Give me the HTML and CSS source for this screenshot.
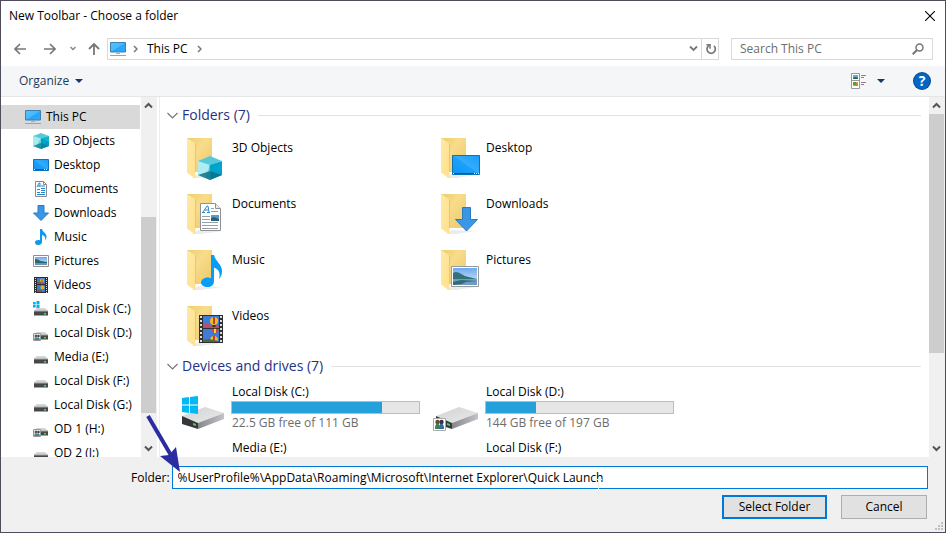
FILE: index.html
```html
<!DOCTYPE html>
<html lang="en">
<head>
<meta charset="utf-8">
<title>New Toolbar - Choose a folder</title>
<link rel="stylesheet" href="styles.css">
</head>
<body>
<svg class="defs" aria-hidden="true">
  <defs>
    <linearGradient id="screen" x1="0" y1="0" x2="1" y2="1"><stop offset="0" stop-color="#5cc0fa"/><stop offset=".5" stop-color="#4ab8fb"/><stop offset=".52" stop-color="#26a5fb"/><stop offset="1" stop-color="#2bacff"/></linearGradient>
    <linearGradient id="desk" x1="0" y1="1" x2="1" y2="0"><stop offset="0" stop-color="#0c95f8"/><stop offset=".5" stop-color="#1ba1fb"/><stop offset=".52" stop-color="#34adfc"/><stop offset="1" stop-color="#189dfa"/></linearGradient>
    <linearGradient id="back" x1="0" y1="0" x2="1" y2="1"><stop offset="0" stop-color="#f0cd6c"/><stop offset=".4" stop-color="#f8dc8b"/><stop offset="1" stop-color="#ecc768"/></linearGradient>
    <linearGradient id="flap" x1="0" y1="0" x2="1" y2="1"><stop offset="0" stop-color="#ffe9a6"/><stop offset="1" stop-color="#ffe08c"/></linearGradient>
    <linearGradient id="top" x1="0" y1="0" x2="1" y2="1"><stop offset="0" stop-color="#d2d3d5"/><stop offset="1" stop-color="#e9e9eb"/></linearGradient>
    <linearGradient id="side" x1="0" y1="0" x2="1" y2="0"><stop offset="0" stop-color="#85878a"/><stop offset="1" stop-color="#c3c4c7"/></linearGradient>
    <linearGradient id="sky" x1="0" y1="0" x2="0" y2="1"><stop offset="0" stop-color="#6ba9ef"/><stop offset="1" stop-color="#dff0fa"/></linearGradient>
  </defs>
  <symbol id="i-pc" viewBox="0 0 16 16"><path d="M.5 1.500h15v9.500H.5z" fill="url(#screen)" stroke="#3f7fac"/><path d="M6 12h4v1H6z" fill="#9bb4c6"/><path d="M0 14h16v1H0z" fill="#8fa6ba"/></symbol>
  <symbol id="i-cube" viewBox="0 0 16 16"><path d="M0 3 8 5v11L0 13z" fill="#5fd3da"/><path d="M0 3 8 5 3 14 0 13z" fill="#a6ecee"/><path d="M16 3 8 5v11l8-3z" fill="#009fc4"/><path d="M8 5 16 3v6z" fill="#0bb5d4"/><path d="M0 3 8 0l8 3-8 2.500z" fill="#58cad6"/><path d="M8 10 16 13 8 16 0 13z" fill="#077d96" opacity=".75"/></symbol>
  <symbol id="i-desktop" viewBox="0 0 16 16"><path d="M.5 2.500h15v11H.5z" fill="url(#desk)" stroke="#1373b5"/><path d="M1 12h14v1H1z" fill="#075d9e"/><path d="M1 12h1v1H1zM11 12h1v1h-1zM13 12h1v1h-1z" fill="#fff"/></symbol>
  <symbol id="i-doc" viewBox="0 0 16 16"><path d="M2.500.5h8l3 3v12h-11z" fill="#fff" stroke="#8b8b8b"/><path d="M10.500.5v3h3" fill="none" stroke="#8b8b8b"/><path d="m4 6 2-4h1v4M5 5h2M8 5h4M4 8.500h3M8 7.500h4M8 9.500h4M4 11.500h3M8 11.500h4M4 13.500h8" fill="none" stroke="#2589d0"/></symbol>
  <symbol id="i-down" viewBox="0 0 16 16"><path d="M5 .5h6V8h4.500L8 15.500.5 8H5z" fill="#3897e6" stroke="#2c78bd"/></symbol>
  <symbol id="i-music" viewBox="0 0 16 16"><path d="M7 0h2c.5 3 4.500 4 4.500 7.500 0 1.500-.5 3-1.500 3.500 1-3-1-4.500-3-5v7c0 1.800-1.700 3-3.600 3S2 15 2 13.400 3.600 11 5.200 11c.8 0 1.300.1 1.800.3z" fill="#0d99f2"/></symbol>
  <symbol id="i-picture" viewBox="0 0 16 16"><path d="M.5 2.500h15v11H.5z" fill="#fff" stroke="#8f8f8f"/><path d="M2 4h12v8H2z" fill="url(#sky)"/><path d="M2 6c2-.5 4 1 6 2l6 1v1H2z" fill="#2b6673"/><path d="M2 10h12v2H2z" fill="#6b93ad"/></symbol>
  <symbol id="i-video" viewBox="0 0 16 16"><path d="M1 0h14v16H1z" fill="#2d2d2d"/><path d="M4 1h8v6H4zM4 8h8v7H4z" fill="#3c7bd0"/><path d="M2.500 1v15M13.500 1v15" stroke="#ddd" stroke-dasharray="1 1"/><circle cx="9" cy="3.500" r="2" fill="#e9b520"/><circle cx="9.500" cy="10.500" r="2" fill="#e4ae20"/><path d="M8.500 2h1v4h-1z" fill="#d23828"/><path d="M4 5h4v2H4zM4 13h5v2H4z" fill="#7a5b45"/></symbol>
  <symbol id="i-disk" viewBox="0 0 16 16"><path d="M3.500 7h8.500l3 3H1z" fill="#d3d4d6"/><path d="M1 10h14v4.500H1z" fill="#454749"/><path d="M1 9.500h14v1H1z" fill="#a5a6a8"/><path d="M11 12h2v1.500h-2z" fill="#41dd52"/></symbol>
  <symbol id="i-sysdisk" viewBox="0 0 16 16"><use href="#i-disk"/><path d="M0 0h7v7H0z" fill="#fff"/><path d="M0 1h2.700v2.500H0zM3.500 0h3v3.500h-3zM0 4h2.700v2.500H0zM3.500 4h3v3h-3z" fill="#00b3f0"/></symbol>
  <symbol id="i-shared" viewBox="0 0 16 16"><use href="#i-disk"/><path d="M.5 8.500h7v7h-7z" fill="#e8eef0" stroke="#999"/><circle cx="3" cy="11" r="1.500" fill="#685341"/><circle cx="5.500" cy="11" r="1.200" fill="#373f47"/><path d="M1 15q1-4 3-2 2-2 3 2z" fill="#3a8797"/></symbol>

  <symbol id="f-base" viewBox="0 0 48 48"><path d="m9 43 6-4 24 1-20 3z" fill="#ececec"/><path d="M4 3h25v34H8z" fill="url(#back)"/><path d="m4 3 8.500 5.500V43h-1L4 37.500z" fill="url(#flap)"/><path d="M12.500 8.500V37" stroke="#e3bd62" stroke-width=".7"/></symbol>
  <symbol id="f-cube" viewBox="-1 0 48 48"><use href="#f-base" width="48" height="48"/><path d="m15 26 12 3.500V45l-12-5z" fill="#75d5de"/><path d="m15 26 12 3.500L22 43l-7-3z" fill="#b0edf0"/><path d="m39 26-12 3.500V45l12-5z" fill="#00a3ce"/><path d="m15 26 12-5 12 5-12 4z" fill="#55c9dc"/><path d="m27 36 12 4-12 5-12-5z" fill="#066b80" opacity=".8"/><path d="M27 30v14" stroke="#1695ad" stroke-width=".6"/></symbol>
  <symbol id="f-desktop" viewBox="-1 0 48 48"><use href="#f-base" width="48" height="48"/><path d="M15.500 20.500h27v19h-27z" fill="url(#desk)" stroke="#1471ad"/><path d="M16 38h26v1H16z" fill="#07599a"/><path d="M16 38h1v1h-1zM37 38h1v1h-1zM39 38h1v1h-1zM41 38h1v1h-1z" fill="#fff"/></symbol>
  <symbol id="f-doc" viewBox="-1 0 48 48"><use href="#f-base" width="48" height="48"/><path d="M17.500 12.500h15l5 5v22h-20z" fill="#fff" stroke="#909090"/><path d="M32.500 12.500v5h5" fill="#e9e9e9" stroke="#909090"/><path d="m20 21 4-6h1l1 6M21.500 19h4M19 21.500h3M24 21.500h3" fill="none" stroke="#268bd2"/><path d="M28 17.500h3M28 20.500h7M19 25.500h8M19 28.500h8M19 31.500h16M19 34.500h16M19 37.500h16" stroke="#92a0aa"/><path d="M28 24h8v6h-8z" fill="#579cd5"/><path d="m28 27 3-1 5 2v2h-8z" fill="#316070"/></symbol>
  <symbol id="f-down" viewBox="-1 0 48 48"><use href="#f-base" width="48" height="48"/><path d="M25.500 16.500h8v12h7L29.500 40l-11-11.500h7z" fill="#3997e5" stroke="#2c7abe"/></symbol>
  <symbol id="f-music" viewBox="-1 0 48 48"><use href="#f-base" width="48" height="48"/><path d="M28 8h3c1 6 8 9 8 16 0 3-1 6-3 8 2-7-1-10-5-11.500V34c0 4-3 6-6.500 6S18 38 18 35.500s3-5 6.500-5c1.500 0 2.500.3 3.500.7z" fill="#079cf5"/></symbol>
  <symbol id="f-picture" viewBox="-1 0 48 48"><use href="#f-base" width="48" height="48"/><path d="M14.500 19.500h27v20h-27z" fill="#fff" stroke="#999"/><path d="M16 21h24v17H16z" fill="url(#sky)"/><path d="M16 26c4-3 8 1 12 3l12 3v1H16z" fill="#34727b"/><path d="M16 32h24v6H16z" fill="#6f9cc4"/><path d="m16 35 8-2 16 1-11 1-4 2-9 1z" fill="#356b72"/></symbol>
  <symbol id="f-video" viewBox="-1 0 48 48"><use href="#f-base" width="48" height="48"/><path d="M16 12h24v28H16z" fill="#303030"/><path d="M20 13h16v12H20zM20 26h16v13H20z" fill="#3f7cda"/><path d="M18 13v27M38 13v27" stroke="#ddd" stroke-width="2" stroke-dasharray="2 2"/><path d="M20 22l4-2 5 3 7-1v3H20z" fill="#b75068"/><circle cx="31" cy="18" r="4" fill="#f0bd20"/><path d="M30 14h2v7h-2z" fill="#d53426"/><path d="M29.500 22h3v2h-3z" fill="#3a2a22"/><path d="M28 27q4-3 8 0l-4 4z" fill="#c94734"/><path d="M31 26h2v4h-2z" fill="#efd345"/><path d="M27 38q0-5 4-5t4 5z" fill="#f0bd20"/><path d="M30 33h2v5h-2z" fill="#d53426"/><path d="m20 37 6-1 10 2v1H20z" fill="#456c47"/></symbol>
  <symbol id="d-base" viewBox="0 0 48 48"><path d="m3 24 23-9 19 6-26 10z" fill="url(#top)"/><path d="m19 31 26-10v6L19 37z" fill="url(#side)"/><path d="m3 24 16 7v6L3 32z" fill="#35383a"/><path d="M14 31l3 1v2l-3-1z" fill="#35dd4a"/></symbol>
  <symbol id="d-system" viewBox="0 0 48 48"><use href="#d-base"/><path d="m3 6 7-1v7.500H3zM11 5l8-1v8.500h-8zM3 13.500h7V21l-7-1zM11 13.500h8V22l-8-1z" fill="#00b9f2"/></symbol>
  <symbol id="d-shared" viewBox="0 0 48 48"><use href="#d-base"/><path d="M.5 26.500h12v12H.5z" fill="#fff" stroke="#aaa"/><circle cx="4.500" cy="30" r="2.200" fill="#6d4934"/><circle cx="8.500" cy="30" r="2.200" fill="#30343b"/><path d="M2 37q0-6 3-5 2 0 2 5z" fill="#3a7f5b"/><path d="M6 37q0-6 3-5 2 0 2 5z" fill="#346d9d"/></symbol>

  <symbol id="chev-up" viewBox="0 0 9 7"><path d="m1 5.500 3.500-3.500L8 5.500" fill="none" stroke="#555" stroke-width="2"/></symbol>
  <symbol id="chev-down" viewBox="0 0 9 7"><path d="m1 1.500 3.500 3.500L8 1.500" fill="none" stroke="#555" stroke-width="2"/></symbol>
  <symbol id="chev-right" viewBox="0 0 5 8"><path d="m1 1 3 3-3 3" fill="none" stroke="#777" stroke-width="1.500"/></symbol>
  <symbol id="caret" viewBox="0 0 8 4"><path d="M0 0h8L4 4z" fill="#1a3763"/></symbol>
  <symbol id="expand" viewBox="0 0 11 7"><path d="m.5 1 5 5 5-5" fill="none" stroke="#777" stroke-width="1.200"/></symbol>
</svg>

<main class="dialog">
  <header class="titlebar">
    <h1>New Toolbar - Choose a folder</h1>
    <button class="plain" aria-label="Close"><svg width="10" height="10" viewBox="0 0 10 10"><path d="m0 0 10 10M10 0 0 10" stroke="#000" stroke-width="1.100"/></svg></button>
  </header>

  <nav class="navrow" aria-label="Navigation">
    <div class="history">
      <button class="plain" aria-label="Back"><svg width="12" height="12" viewBox="0 0 12 12"><path d="M12 6H1M6 1 1 6l5 5" fill="none" stroke="#777" stroke-width="1.600"/></svg></button>
      <button class="plain" aria-label="Forward"><svg width="12" height="12" viewBox="0 0 12 12"><path d="M0 6h11M6 1l5 5-5 5" fill="none" stroke="#777" stroke-width="1.600"/></svg></button>
      <button class="plain recent" aria-label="Recent locations"><svg width="6" height="5" viewBox="0 0 6 5"><path d="m.5 1 2.500 2.500L5.500 1" fill="none" stroke="#888" stroke-width="1.500"/></svg></button>
      <button class="plain" aria-label="Up"><svg width="12" height="12" viewBox="0 0 12 12"><path d="M6 12V1M1 6l5-5 5 5" fill="none" stroke="#777" stroke-width="1.800"/></svg></button>
    </div>
    <div class="address">
      <svg width="16" height="16"><use href="#i-pc"/></svg>
      <svg width="5" height="8"><use href="#chev-right"/></svg>
      <button class="plain crumb">This PC</button>
      <svg width="5" height="8"><use href="#chev-right"/></svg>
      <button class="plain drop" aria-label="Previous locations"><svg width="9" height="7" viewBox="0 0 9 7"><path d="m1 1.500 3.500 3.500L8 1.500" fill="none" stroke="#777" stroke-width="1.800"/></svg></button>
      <button class="plain refresh" aria-label="Refresh"><svg width="12" height="12" viewBox="0 0 12 12"><path d="M9 3A4.200 4.200 0 1 1 4 2.500" fill="none" stroke="#777" stroke-width="1.700"/><path d="M1.500 1.800H5v4" fill="none" stroke="#777" stroke-width="1.500"/></svg></button>
    </div>
    <div class="search">
      <input type="search" placeholder="Search This PC" aria-label="Search This PC">
      <svg width="12" height="12" viewBox="0 0 12 12"><circle cx="7.500" cy="4.500" r="3.500" fill="none" stroke="#777" stroke-width="1.500"/><path d="M5 7 .7 11.300" stroke="#777" stroke-width="2"/></svg>
    </div>
  </nav>

  <div class="commands">
    <button class="plain organize">Organize <svg width="8" height="4"><use href="#caret"/></svg></button>
    <button class="plain view" aria-label="Change your view">
      <svg width="16" height="16" viewBox="0 0 16 16"><path d="M.5.5h8v15h-8zM0 7.500h9" fill="#fff" stroke="#999"/><path d="M2 2h5v4H2z" fill="#66a9e8"/><path d="M2 5q3-2 5 0v1H2z" fill="#296d3d"/><path d="M2 9h5v4H2z" fill="#c9a449"/><circle cx="5.500" cy="11.500" r="1.500" fill="#df7728"/><path d="M2 9h3v3H2z" fill="#589a48"/><path d="M10 2.500h5M10 4.500h3M10 9.500h5M10 11.500h3" stroke="#9b7b86"/></svg>
      <svg width="8" height="4"><use href="#caret"/></svg>
    </button>
    <button class="plain help" aria-label="Help">?</button>
  </div>

  <div class="browser">
    <nav class="tree" aria-label="Folders">
      <ul>
        <li class="selected"><a href="#"><svg><use href="#i-pc"/></svg>This PC</a></li>
        <li><a href="#"><svg><use href="#i-cube"/></svg>3D Objects</a></li>
        <li><a href="#"><svg><use href="#i-desktop"/></svg>Desktop</a></li>
        <li><a href="#"><svg><use href="#i-doc"/></svg>Documents</a></li>
        <li><a href="#"><svg><use href="#i-down"/></svg>Downloads</a></li>
        <li><a href="#"><svg><use href="#i-music"/></svg>Music</a></li>
        <li><a href="#"><svg><use href="#i-picture"/></svg>Pictures</a></li>
        <li><a href="#"><svg><use href="#i-video"/></svg>Videos</a></li>
        <li><a href="#"><svg><use href="#i-sysdisk"/></svg>Local Disk (C:)</a></li>
        <li><a href="#"><svg><use href="#i-shared"/></svg>Local Disk (D:)</a></li>
        <li><a href="#"><svg><use href="#i-disk"/></svg>Media (E:)</a></li>
        <li><a href="#"><svg><use href="#i-disk"/></svg>Local Disk (F:)</a></li>
        <li><a href="#"><svg><use href="#i-disk"/></svg>Local Disk (G:)</a></li>
        <li><a href="#"><svg><use href="#i-shared"/></svg>OD 1 (H:)</a></li>
        <li><a href="#"><svg><use href="#i-disk"/></svg>OD 2 (I:)</a></li>
      </ul>
    </nav>
    <div class="scrollbar tree-scroll">
      <button class="plain" aria-label="Scroll folders up"><svg width="9" height="7"><use href="#chev-up"/></svg></button>
      <div class="track"><div class="thumb"></div></div>
      <button class="plain" aria-label="Scroll folders down"><svg width="9" height="7"><use href="#chev-down"/></svg></button>
    </div>
    <div class="content">
      <section>
        <h2><svg width="11" height="7"><use href="#expand"/></svg>Folders (7)</h2>
        <div class="items">
          <a class="item" href="#"><svg><use href="#f-cube"/></svg><span>3D Objects</span></a>
          <a class="item" href="#"><svg><use href="#f-desktop"/></svg><span>Desktop</span></a>
          <a class="item" href="#"><svg><use href="#f-doc"/></svg><span>Documents</span></a>
          <a class="item" href="#"><svg><use href="#f-down"/></svg><span>Downloads</span></a>
          <a class="item" href="#"><svg><use href="#f-music"/></svg><span>Music</span></a>
          <a class="item" href="#"><svg><use href="#f-picture"/></svg><span>Pictures</span></a>
          <a class="item" href="#"><svg><use href="#f-video"/></svg><span>Videos</span></a>
        </div>
      </section>
      <section>
        <h2><svg width="11" height="7"><use href="#expand"/></svg>Devices and drives (7)</h2>
        <div class="items">
          <a class="item drive" href="#"><svg><use href="#d-system"/></svg><span class="info"><span>Local Disk (C:)</span><span class="bar"><span class="used" style="width:80%"></span></span><span class="free">22.5 GB free of 111 GB</span></span></a>
          <a class="item drive" href="#"><svg><use href="#d-shared"/></svg><span class="info"><span>Local Disk (D:)</span><span class="bar"><span class="used" style="width:27%"></span></span><span class="free">144 GB free of 197 GB</span></span></a>
          <a class="item drive" href="#"><svg></svg><span class="info"><span>Media (E:)</span></span></a>
          <a class="item drive" href="#"><svg></svg><span class="info"><span>Local Disk (F:)</span></span></a>
        </div>
      </section>
    </div>
    <div class="scrollbar content-scroll">
      <button class="plain" aria-label="Scroll up"><svg width="9" height="7"><use href="#chev-up"/></svg></button>
      <div class="track"><div class="thumb"></div></div>
      <button class="plain" aria-label="Scroll down"><svg width="9" height="7"><use href="#chev-down"/></svg></button>
    </div>
  </div>

  <form class="footer">
    <div class="field">
      <label for="folder">Folder:</label>
      <div class="fieldbox">
        <input id="folder" type="text" value="%UserProfile%\AppData\Roaming\Microsoft\Internet Explorer\Quick Launch">
        <svg class="pointer" width="36" height="60" viewBox="0 0 36 60" aria-hidden="true"><path d="m3 4 24 41" stroke="#2b2ca1" stroke-width="4"/><path d="m35 60-20-16 9-1 7-8z" fill="#2b2ca1"/></svg>
        <svg class="ibeam" width="7" height="16" viewBox="0 0 7 16" aria-hidden="true"><path d="M0 .5h7M3.500 1v14M0 15.500h7" stroke="#ededed"/></svg>
      </div>
    </div>
    <div class="actions">
      <button type="button" class="action primary">Select Folder</button>
      <button type="button" class="action">Cancel</button>
    </div>
    <svg class="grip" width="9" height="9" viewBox="0 0 9 9" aria-hidden="true"><path d="M6 0h2v2H6zM3 3h2v2H3zM6 3h2v2H6zM0 6h2v2H0zM3 6h2v2H3zM6 6h2v2H6z" fill="#bfbfbf"/></svg>
  </form>
</main>
</body>
</html>
```
FILE: styles.css
```css
* {
  box-sizing: border-box;
}

body {
  margin: 0;
  font: 12px/16px "Open Sans", "Noto Sans", sans-serif;
  color: #000;
}

button,
input {
  font: inherit;
  color: inherit;
}

svg {
  display: block;
  flex: none;
}

a {
  color: inherit;
  text-decoration: none;
}

h1,
h2,
ul {
  margin: 0;
  padding: 0;
  font: inherit;
  list-style: none;
}

.defs {
  position: absolute;
  width: 0;
  height: 0;
}

.plain {
  display: flex;
  align-items: center;
  justify-content: center;
  padding: 0;
  border: 0;
  background: none;
}

.dialog {
  display: flex;
  flex-direction: column;
  height: 100vh;
  border: 1px solid #514b5e;
  background: #fff;
}

.titlebar {
  display: flex;
  flex: none;
  align-items: center;
  justify-content: space-between;
  height: 30px;
  padding: 0 10px 0 8px;
}

.navrow {
  display: flex;
  flex: none;
  align-items: center;
  gap: 12px;
  height: 35px;
  padding: 0 12px 0 13px;
}

.history {
  display: flex;
  align-items: center;
  gap: 14px;
  margin-right: -5px;
}

.history .plain:nth-child(2) {
  margin-left: 4px;
}

.history .recent {
  margin-right: -2px;
}

.address {
  display: flex;
  flex: 1;
  align-items: center;
  height: 22px;
  padding-left: 2px;
  border: 1px solid #d9d9d9;
}

.address > svg + svg {
  margin-left: 7px;
}

.crumb {
  margin: 0 9px;
}

.drop {
  width: 16px;
  height: 20px;
  margin-left: auto;
}

.refresh {
  width: 17px;
  height: 20px;
  padding-left: 2px;
  border-left: 1px solid #d9d9d9;
}

.search {
  display: flex;
  align-items: center;
  width: 202px;
  height: 22px;
  padding: 0 8px;
  border: 1px solid #d9d9d9;
}

.search input {
  flex: 1;
  min-width: 0;
  padding: 0;
  border: 0;
  outline: 0;
}

.search input::placeholder {
  color: #6d6d6d;
}

.commands {
  display: flex;
  flex: none;
  align-items: center;
  height: 31px;
  padding: 0 15px 0 18px;
  border-bottom: 1px solid #e5e6e8;
  background: #f5f6f7;
}

.organize {
  gap: 6px;
  color: #1e395b;
}

.view {
  gap: 10px;
  margin-left: auto;
}

.help {
  width: 16px;
  height: 16px;
  margin-left: 29px;
  border-radius: 50%;
  background: #0067c5;
  box-shadow: 0 0 0 1px #0a4a8a;
  color: #fff;
  font-weight: 700;
  font-size: 14px;
}

.browser {
  display: flex;
  flex: 1;
  min-height: 0;
}

.tree {
  width: 139px;
  padding-top: 8px;
  overflow: hidden;
}

.tree a {
  display: flex;
  align-items: center;
  gap: 5px;
  height: 24px;
  padding-left: 32px;
  white-space: nowrap;
}

.tree svg {
  width: 16px;
  height: 16px;
}

.tree .selected a {
  padding-left: 24px;
  background: #d9d9d9;
}

.scrollbar {
  display: flex;
  flex: none;
  flex-direction: column;
  width: 16px;
  padding-right: 1px;
  background: #f0f0f0;
}

.scrollbar .plain {
  height: 17px;
}

.track {
  display: flex;
  flex: 1;
  flex-direction: column;
}

.track::before,
.track::after {
  content: "";
}

.thumb {
  background: #cdcdcd;
}

.tree-scroll {
  margin-left: 1px;
}

.tree-scroll .track::before {
  flex: 103;
}

.tree-scroll .thumb {
  flex: 196;
}

.tree-scroll .track::after {
  flex: 27;
}

.content-scroll .thumb {
  flex: 239;
}

.content-scroll .track::after {
  flex: 87;
}

.content {
  flex: 1;
  min-width: 0;
  margin-left: 2px;
  padding: 7px 8px 0 7px;
  border-left: 1px solid #ececec;
  overflow: hidden;
}

.content h2 {
  display: flex;
  align-items: center;
  height: 22px;
  font-size: 14px;
  line-height: 20px;
  color: #1e3287;
}

.content h2 svg {
  margin-right: 4px;
}

.content h2::after {
  content: "";
  flex: 1;
  height: 1px;
  margin-left: 8px;
  background: #e2e2e2;
}

.items {
  display: grid;
  grid-template-columns: repeat(auto-fill, 254px);
  grid-auto-rows: 56px;
  padding: 5px 0 0 15px;
}

.item {
  display: flex;
  gap: 2px;
}

.item > svg {
  width: 48px;
  height: 48px;
  margin-top: 4px;
}

.item > span {
  padding-top: 9px;
}

.drive > svg {
  margin: 10px 3px 0 -3px;
}

.drive .info {
  display: flex;
  flex-direction: column;
  padding-top: 2px;
}

.bar {
  width: 189px;
  height: 13px;
  margin: 1px 0 1px -1px;
  border: 1px solid #bcbcbc;
  background: #e6e6e6;
}

.used {
  display: block;
  height: 100%;
  background: #26a0da;
}

.free {
  color: #6d6d6d;
}

.footer {
  position: relative;
  flex: none;
  padding: 9px 17px 13px 130px;
  background: #f0f0f0;
}

.field {
  display: flex;
  align-items: center;
  gap: 2px;
}

.fieldbox {
  position: relative;
  flex: 1;
}

.fieldbox input {
  display: block;
  width: 100%;
  height: 23px;
  padding: 0 5px;
  border: 1px solid #0078d7;
  outline: 0;
  background: #fff;
}

.pointer {
  position: absolute;
  left: -27px;
  top: -54px;
}

.ibeam {
  position: absolute;
  left: 423px;
  top: 13px;
}

.actions {
  display: flex;
  justify-content: flex-end;
  gap: 14px;
  padding: 6px 1px 0 0;
}

.action {
  width: 86px;
  height: 24px;
  padding: 0;
  border: 1px solid #adadad;
  background: #e1e1e1;
}

.primary {
  width: 105px;
  border: 2px solid #0078d7;
}

.grip {
  position: absolute;
  right: 1px;
  bottom: 1px;
}
```
